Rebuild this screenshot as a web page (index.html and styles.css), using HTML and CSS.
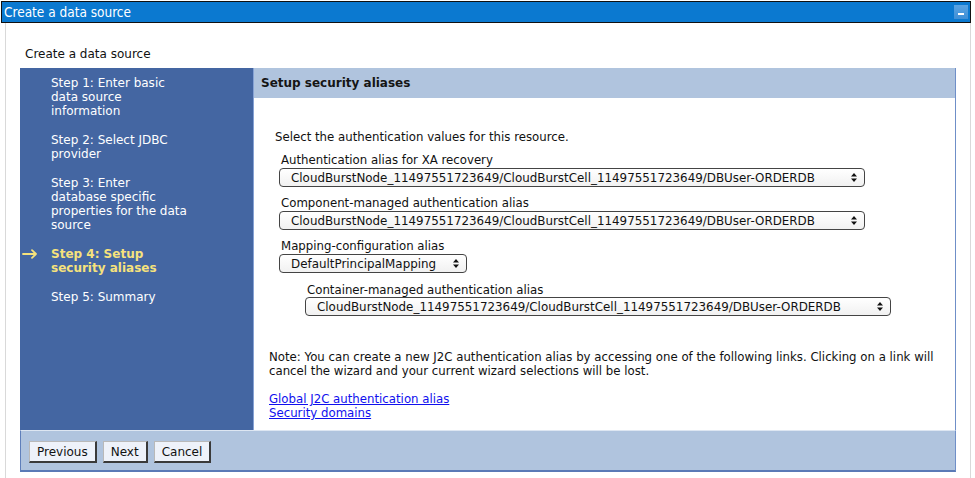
FILE: index.html
```html
<!DOCTYPE html>
<html>
<head>
<meta charset="utf-8">
<title>Create a data source</title>
<link rel="stylesheet" href="styles.css">
</head>
<body>
<div class="portlet">
  <div class="titlebar">
    <span class="title">Create a data source</span>
    <span class="minbtn"><span class="dash"></span></span>
  </div>
  <div class="portlet-body">
    <div class="subtitle">Create a data source</div>
    <div class="wizard">
      <div class="nav">
        <div class="step">Step 1: Enter basic<br>data source<br>information</div>
        <div class="step">Step 2: Select JDBC<br>provider</div>
        <div class="step">Step 3: Enter<br>database specific<br>properties for the data<br>source</div>
        <div class="step current">
          <svg class="arrow" width="16" height="10" viewBox="0 0 16 10"><path d="M1 5H14M10 1.2L14 5L10 8.8" fill="none" stroke="#f6e27c" stroke-width="1.8" stroke-linecap="round" stroke-linejoin="round"/></svg>
          Step 4: Setup<br>security aliases
        </div>
        <div class="step">Step 5: Summary</div>
      </div>
      <div class="panel">
        <div class="panel-head">Setup security aliases</div>
        <div class="panel-content">
          <div class="intro">Select the authentication values for this resource.</div>
          <div class="field">
            <div class="label">Authentication alias for XA recovery</div>
            <div class="select wide"><span class="val">CloudBurstNode_11497551723649/CloudBurstCell_11497551723649/DBUser-ORDERDB</span><svg class="updown" width="6" height="9" viewBox="0 0 6 9"><path d="M3 0L6 3.5H0Z M3 9L6 5.5H0Z" fill="#111"/></svg></div>
          </div>
          <div class="field">
            <div class="label">Component-managed authentication alias</div>
            <div class="select wide"><span class="val">CloudBurstNode_11497551723649/CloudBurstCell_11497551723649/DBUser-ORDERDB</span><svg class="updown" width="6" height="9" viewBox="0 0 6 9"><path d="M3 0L6 3.5H0Z M3 9L6 5.5H0Z" fill="#111"/></svg></div>
          </div>
          <div class="field">
            <div class="label">Mapping-configuration alias</div>
            <div class="select narrow"><span class="val">DefaultPrincipalMapping</span><svg class="updown" width="6" height="9" viewBox="0 0 6 9"><path d="M3 0L6 3.5H0Z M3 9L6 5.5H0Z" fill="#111"/></svg></div>
          </div>
          <div class="field indent">
            <div class="label">Container-managed authentication alias</div>
            <div class="select wide"><span class="val">CloudBurstNode_11497551723649/CloudBurstCell_11497551723649/DBUser-ORDERDB</span><svg class="updown" width="6" height="9" viewBox="0 0 6 9"><path d="M3 0L6 3.5H0Z M3 9L6 5.5H0Z" fill="#111"/></svg></div>
          </div>
          <p class="note">Note: You can create a new J2C authentication alias by accessing one of the following links. Clicking on a link will cancel the wizard and your current wizard selections will be lost.</p>
          <div class="links">
            <a href="#">Global J2C authentication alias</a><br>
            <a href="#">Security domains</a>
          </div>
        </div>
      </div>
      <div class="buttons">
        <button class="btn">Previous</button>
        <button class="btn">Next</button>
        <button class="btn">Cancel</button>
      </div>
    </div>
  </div>
</div>
</body>
</html>
```
FILE: styles.css
```css
html, body {
  margin: 0;
  padding: 0;
  background: #fff;
}
body {
  font-family: "DejaVu Sans", Verdana, sans-serif;
  color: #111;
}
.portlet {
  margin: 1px 0 0 1px;
  width: 970px;
}
.titlebar {
  box-sizing: border-box;
  height: 22px;
  border: 1px solid #111;
  background: #0b79d0;
  display: flex;
  align-items: center;
  justify-content: space-between;
  padding: 0 2px 0 2px;
}
.title {
  font-family: "DejaVu Sans Condensed", "DejaVu Sans", sans-serif;
  font-size: 13.5px;
  color: #fff;
  line-height: 18px;
}
.minbtn {
  width: 14px;
  height: 14px;
  background: linear-gradient(#5aa3e2, #3f8fd6);
  display: flex;
  align-items: flex-end;
  justify-content: center;
  box-sizing: border-box;
  padding-bottom: 4px;
}
.dash {
  width: 6px;
  height: 2px;
  background: #fff;
}
.portlet-body {
  box-sizing: border-box;
  width: 966px;
  margin-left: 4px;
  min-height: 455px;
  border-left: 1px solid #d9d9d9;
  border-right: 1px solid #d9d9d9;
  padding-top: 24px;
}
.subtitle {
  padding-left: 19px;
  font-size: 12px;
  line-height: 14px;
}
.wizard {
  margin: 7px 0 0 14px;
  width: 936px;
  display: grid;
  grid-template-columns: 233px 1fr;
  grid-template-rows: 362px 42px;
}
.nav {
  background: #4466a2;
  padding: 8px 0 0 31px;
  color: #fff;
  font-size: 12px;
  line-height: 14px;
}
.step {
  margin-bottom: 15px;
  position: relative;
}
.step.current {
  color: #f6e27c;
  font-weight: bold;
}
.arrow {
  position: absolute;
  left: -29px;
  top: 2px;
}
.panel {
  background: #fff;
  border-left: 1px solid #86a2d4;
  border-right: 1px solid #6f8fc8;
  display: flex;
  flex-direction: column;
}
.panel-head {
  height: 30px;
  background: #b0c4de;
  display: flex;
  align-items: center;
  padding-left: 7px;
  font-weight: bold;
  font-size: 12px;
  color: #151515;
}
.panel-content {
  padding: 32px 0 0 0;
  font-size: 11.75px;
  line-height: 14px;
}
.intro {
  margin-left: 21px;
  margin-bottom: 9px;
}
.field {
  margin-left: 25px;
  margin-bottom: 9px;
}
.field .label {
  margin-left: 2px;
  margin-bottom: 1px;
}
.field.indent {
  margin-left: 51px;
  margin-top: 10px;
}
.field.indent .label {
  margin-bottom: 0;
}
.select {
  box-sizing: border-box;
  height: 19px;
  border: 1px solid #444;
  border-radius: 4px;
  background: linear-gradient(#ffffff, #f1f1f1);
  display: flex;
  align-items: center;
  justify-content: space-between;
  padding: 0 7px 0 11px;
  font-size: 11.9px;
  color: #111;
}
.select.wide { width: 586px; }
.select.narrow { width: 188px; }
.updown { flex: none; }
.note {
  margin: 34px 0 14px 15px;
  padding-right: 10px;
}
.links {
  margin-left: 15px;
}
.links a {
  color: #1010ee;
  text-decoration: underline;
}
.buttons {
  grid-column: 1 / 3;
  background: #b0c4de;
  border-top: 1px solid #dde6f2;
  border-left: 1px solid #5f7fbb;
  border-right: 1px solid #6f8fc8;
  border-bottom: 2px solid #5a7ab6;
  display: flex;
  align-items: flex-start;
  padding: 10px 0 0 8px;
  gap: 6px;
}
.btn {
  box-sizing: border-box;
  height: 22px;
  font-family: "DejaVu Sans", sans-serif;
  font-size: 12px;
  color: #111;
  background: #eef2fa;
  border-style: solid;
  border-width: 1px 2px 2px 1px;
  border-color: #b9b9b9 #3a3a3a #3a3a3a #b9b9b9;
  padding: 0 7px;
  margin: 0;
}
```
